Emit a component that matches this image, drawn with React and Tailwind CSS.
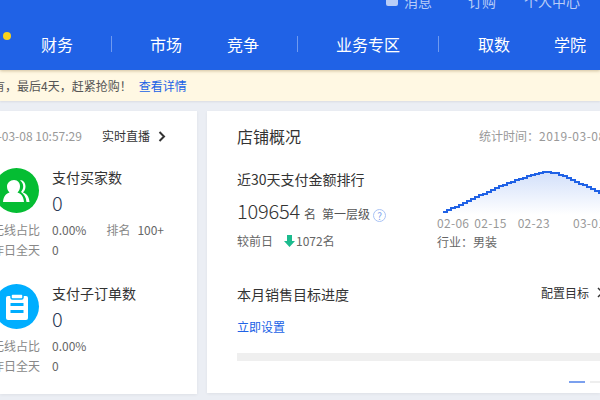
import React from "react";

const curve = [
  [443, 212], [463, 203], [480, 195], [497, 187], [515, 180], [530, 175.5], [540, 172.5], [547, 172],
  [555, 173], [563, 176], [580, 184], [600, 193], [610, 198],
];

function stepped() {
  const out = [];
  let prevY = null;
  for (let x = 443; x <= 610; x += 4) {
    let y = 212;
    for (let i = 0; i < curve.length - 1; i++) {
      const [a, b] = curve[i];
      const [c, d] = curve[i + 1];
      if (x >= a && x <= c) y = b + ((d - b) * (x - a)) / (c - a);
    }
    y = Math.round(y);
    if (prevY !== null) out.push([x, prevY]);
    out.push([x, y]);
    prevY = y;
  }
  return out;
}

function Chart() {
  const pts = stepped().map(([x, y]) => [x - 437, y - 165]);
  const line = pts.map((p) => p.join(",")).join(" ");
  const area = `${line} ${pts[pts.length - 1][0]},50 6,50`;
  return (
    <svg width="175" height="50" className="block" shapeRendering="crispEdges">
      <defs>
        <linearGradient id="chartFill" x1="0" y1="0" x2="0" y2="1">
          <stop offset="0" stopColor="#2062e6" stopOpacity="0.2" />
          <stop offset="1" stopColor="#2062e6" stopOpacity="0" />
        </linearGradient>
      </defs>
      <polygon points={area} fill="url(#chartFill)" />
      <polyline points={line} fill="none" stroke="#2062e6" strokeWidth="2.5" />
    </svg>
  );
}

function Metric({ icon, color, title }) {
  return (
    <div className="flex items-start">
      <div className={`flex h-[45px] w-[45px] shrink-0 items-center justify-center rounded-full ${color}`}>{icon}</div>
      <div className="ml-[13px] mt-[-1px]">
        <div className="text-[14px] leading-[20px] text-[#333]">{title}</div>
        <div className="mt-[4px] text-[20px] font-light leading-[24px] text-[#2b3a55]">0</div>
      </div>
    </div>
  );
}

function Stat({ label, value, extra }) {
  return (
    <div className="ml-[-8px] flex h-[20px] items-center text-[12px] text-[#888]">
      <span className="w-[60px] shrink-0">{label}</span>
      <span className="text-[#666]">{value}</span>
      {extra}
    </div>
  );
}

const UserIcon = (
  <svg width="27" height="24" viewBox="0 0 27 24" fill="white">
    <path d="M11 1c4 0 6 3 6 6.500 0 2.500-1 4.500-2.500 6 3 1 6 3 6.500 9.500H0c.5-6.500 3.500-8.500 6.500-9.500C5 12 4 10 4 7.500 4 4 7 1 11 1z" />
    <path d="M17 1c3.500 0 5.500 3 5.500 6.500 0 2.500-1 4.500-2.500 6 3 1 6 3 6.500 9.500h-3c-.5-5-2.500-8-5.500-10 1.500-2 2.200-3.500 2.200-5.500 0-2.500-1-4.500-3-6 0 0 0-.5 0-.5z" />
  </svg>
);

const ClipIcon = (
  <svg width="22" height="26" viewBox="0 0 22 26">
    <path d="M2 2h18a2 2 0 0 1 2 2v20a2 2 0 0 1-2 2H2a2 2 0 0 1-2-2V4a2 2 0 0 1 2-2z" fill="white" />
    <rect x="5" y="0" width="12" height="5" rx="1.500" fill="white" stroke="#00aeff" strokeWidth="1.500" />
    <rect x="4.500" y="9" width="13" height="3" fill="#00aeff" />
    <rect x="4.500" y="16" width="13" height="3" fill="#00aeff" />
  </svg>
);

export default function App() {
  return (
    <div className="flex h-[400px] w-[600px] flex-col overflow-hidden bg-[#ebeef4] font-['Noto_Sans_CJK_SC','Noto_Sans',sans-serif]">
      <header className="relative z-10 h-[70px] shrink-0 bg-[#2062e6] shadow-[0_1px_3px_rgba(120,90,30,0.35)]">
        <div className="flex h-[4px] items-start justify-end pr-[20px] text-[14px] text-[#b9cdf7]">
          <div className="mt-[-9px] flex items-center leading-[20px]">
            <span className="mr-[6px] h-[10px] w-[12px] rounded-[2px] bg-[#b9cdf7]" />
            <span>消息</span>
            <span className="ml-[36px]">订购</span>
            <span className="ml-[28px]">个人中心</span>
          </div>
        </div>
        <span className="absolute left-[3px] top-[32px] h-[8px] w-[8px] rounded-full bg-[#f8d21c]" />
        <nav className="mt-[28px] flex h-[24px] items-center pl-[41px] text-[16px] leading-[24px] text-white">
          <span>财务</span>
          <span className="ml-[38px] h-[16px] w-px bg-[#6f9af0]" />
          <span className="ml-[38px]">市场</span>
          <span className="ml-[45px]">竞争</span>
          <span className="ml-[38px] h-[16px] w-px bg-[#6f9af0]" />
          <span className="ml-[38px]">业务专区</span>
          <span className="ml-[38px] h-[16px] w-px bg-[#6f9af0]" />
          <span className="ml-[39px]">取数</span>
          <span className="ml-[44px]">学院</span>
        </nav>
      </header>

      <div className="flex h-[31px] shrink-0 items-center whitespace-nowrap bg-[#fff8e3] text-[12px] text-[#555] shadow-[0_1px_2px_rgba(0,0,0,0.08)]">
        <span className="ml-[-7px]">有，最后4天，赶紧抢购！</span>
        <span className="ml-[7px] text-[#2062e6]">查看详情</span>
      </div>

      <main className="flex min-h-0 flex-1 items-start gap-[10px] pt-[10px]">
        <section className="flex h-[283px] w-[197px] shrink-0 flex-col overflow-hidden bg-white shadow-[0_1px_3px_rgba(0,0,0,0.06)]">
          <div className="mt-[15px] flex h-[20px] items-center whitespace-nowrap text-[12px]">
            <span className="ml-[-29px] text-[#999]">2019-03-08 10:57:29</span>
            <span className="ml-[20px] text-[#333]">实时直播</span>
            <svg width="8" height="11" viewBox="0 0 8 11" className="ml-[8px]" fill="none" stroke="#333" strokeWidth="2">
              <path d="M1.500 1l4.500 4.500L1.500 10" />
            </svg>
          </div>
          <div className="ml-[-6px] mt-[22px] whitespace-nowrap">
            <Metric icon={UserIcon} color="bg-[#05bd33]" title="支付买家数" />
            <div className="ml-[6px] mt-[5px]">
              <Stat
                label="无线占比"
                value="0.00%"
                extra={
                  <>
                    <span className="ml-[20px] text-[#888]">排名</span>
                    <span className="ml-[7px] text-[#666]">100+</span>
                  </>
                }
              />
              <Stat label="昨日全天" value="0" />
            </div>
          </div>
          <div className="ml-[-6px] mt-[24px] whitespace-nowrap">
            <Metric icon={ClipIcon} color="bg-[#00aeff]" title="支付子订单数" />
            <div className="ml-[6px] mt-[5px]">
              <Stat label="无线占比" value="0.00%" />
              <Stat label="昨日全天" value="0" />
            </div>
          </div>
        </section>

        <section className="h-[282px] min-w-0 flex-1 overflow-hidden bg-white pl-[30px] shadow-[0_1px_3px_rgba(0,0,0,0.06)]">
          <div className="mt-[13px] flex h-[24px] items-center whitespace-nowrap">
            <span className="text-[16px] text-[#333]">店铺概况</span>
            <span className="ml-[178px] text-[12px] text-[#999]">
              统计时间：<span className="tracking-[0.5px]">2019-03-08</span>
            </span>
          </div>
          <div className="mt-[21px] flex">
            <div className="w-[200px] shrink-0">
              <div className="text-[14px] leading-[20px] text-[#333]">近30天支付金额排行</div>
              <div className="mt-[8px] flex items-baseline whitespace-nowrap leading-[28px]">
                <span className="text-[20px] font-light tracking-[-0.2px] text-[#333]">109654</span>
                <span className="ml-[4px] text-[12px] text-[#555]">名</span>
                <span className="ml-[6px] text-[12px] text-[#555]">第一层级</span>
                <span className="ml-[3px] mt-[6px] flex h-[13px] w-[13px] items-center justify-center self-center rounded-full border border-[#a9c3f5] text-[10px] leading-none text-[#7fa5ee]">?</span>
              </div>
              <div className="mt-[3px] flex items-center text-[12px] leading-[20px] text-[#666]">
                <span>较前日</span>
                <svg width="11" height="12" viewBox="0 0 11 12" className="ml-[11px]" fill="#1cbb8e">
                  <path d="M3 0h5v6h3l-5.500 6L0 6h3z" />
                </svg>
                <span className="ml-[1px]">1072名</span>
              </div>
            </div>
            <div className="min-w-0 flex-1">
              <div className="mt-[-4px]">
                <Chart />
              </div>
              <div className="flex whitespace-nowrap text-[12px] leading-[16px] tracking-[0.3px] text-[#999]">
                <span>02-06</span>
                <span className="ml-[5px]">02-15</span>
                <span className="ml-[11px]">02-23</span>
                <span className="ml-[23px]">03-01</span>
              </div>
              <div className="mt-[2px] whitespace-nowrap text-[12px] leading-[18px] text-[#666]">行业：男装</div>
            </div>
          </div>
          <div className="mt-[33px] flex items-center whitespace-nowrap">
            <span className="text-[14px] leading-[20px] text-[#333]">本月销售目标进度</span>
            <span className="ml-[192px] mt-[-3px] text-[12px] text-[#333]">配置目标</span>
            <svg width="8" height="11" viewBox="0 0 8 11" className="ml-[8px] mt-[-3px] shrink-0" fill="none" stroke="#333" strokeWidth="1.500">
              <path d="M1 1l4.500 4.500L1 10" />
            </svg>
          </div>
          <div className="mt-[13px] text-[12px] leading-[20px] text-[#2062e6]">立即设置</div>
          <div className="mt-[16px] h-[8px] bg-[#efefef]" />
          <div className="mt-[20px] flex justify-end gap-[5px]">
            <span className="h-[2px] w-[16px] bg-[#7ba0ee]" />
            <span className="h-[2px] w-[10px] bg-[#eeeeee]" />
          </div>
        </section>
      </main>
    </div>
  );
}
